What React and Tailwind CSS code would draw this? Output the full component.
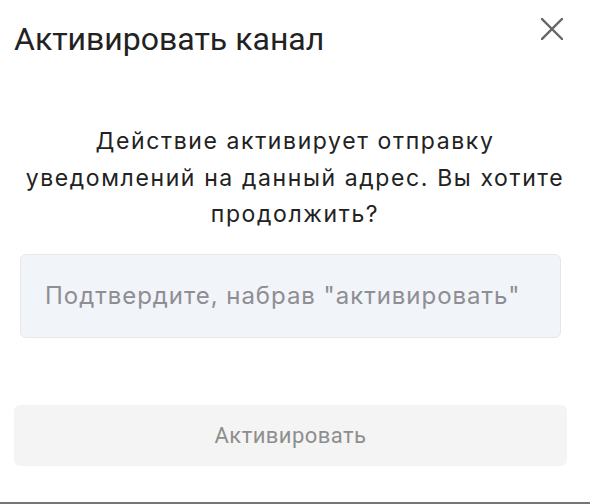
import React from 'react';

const roboto = "font-['Roboto','Liberation_Sans',sans-serif]";
const inter = "font-['Inter','Noto_Sans',sans-serif]";

function CloseIcon() {
  return (
    <svg width="22" height="22" viewBox="0 0 22 22" className="block">
      <path d="M1 1L21 21M21 1L1 21" stroke="#666666" strokeWidth="2.4" strokeLinecap="square" fill="none" />
    </svg>
  );
}

export default function App() {
  return (
    <div className="w-[590px] h-[504px] bg-white border-b-2 border-[#767676] flex flex-col overflow-hidden">
      {/* header */}
      <div className="flex items-start justify-between pl-[14px] pr-[27px] pt-[20px]">
        <h1 className={`${roboto} text-[32px] leading-[38px] font-normal text-[#222222]`}>
          Активировать канал
        </h1>
        <button className="mt-[-2px]">
          <CloseIcon />
        </button>
      </div>

      {/* message */}
      <p className={`${inter} mt-[65px] px-[20px] text-center text-[23px] leading-[36.5px] tracking-[0.07em] text-[#222222]`}>
        Действие активирует отправку уведомлений на данный адрес. Вы хотите продолжить?
      </p>

      {/* confirm input */}
      <div className="px-[20px] mt-[21px]">
        <input
          type="text"
          placeholder='Подтвердите, набрав "активировать"'
          className={`${inter} w-[541px] h-[84px] rounded-[6px] border border-[#e3e6eb] bg-[#f1f4f9] pl-[24px] text-[24px] tracking-[0.04em] text-[#222222] placeholder:text-[#8e8e93] outline-none`}
        />
      </div>

      {/* action */}
      <div className="px-[14px] mt-[67px]">
        <button
          disabled
          className={`${roboto} w-[553px] h-[61px] rounded-[6px] bg-[#f4f4f4] text-[22px] tracking-[0.02em] text-[#8e8e8e]`}
        >
          Активировать
        </button>
      </div>
    </div>
  );
}
